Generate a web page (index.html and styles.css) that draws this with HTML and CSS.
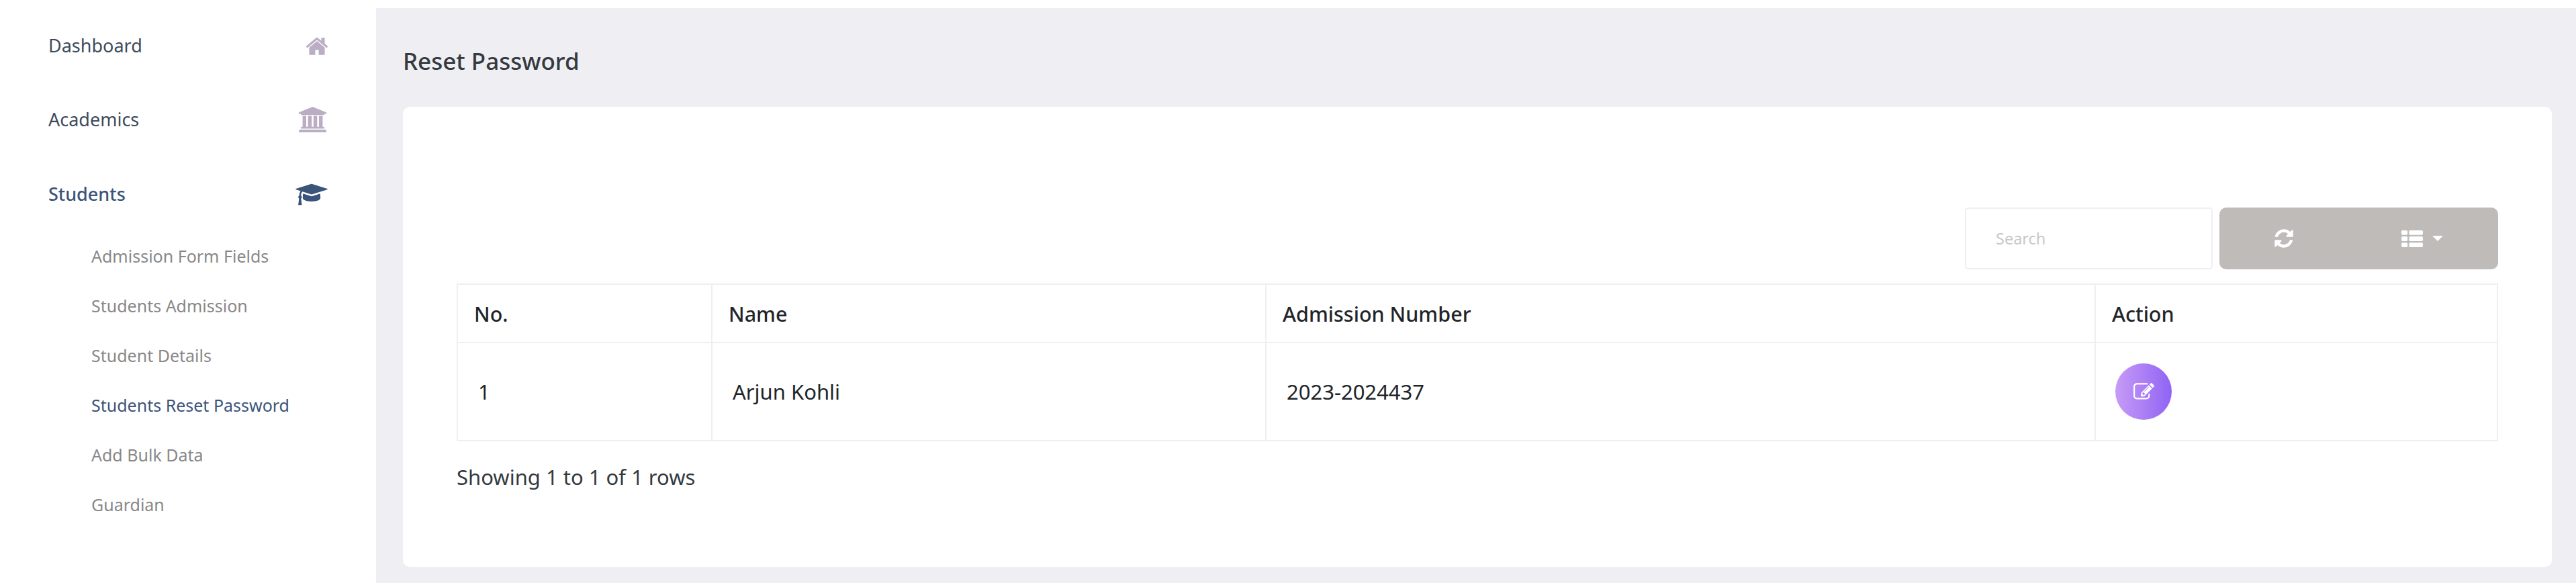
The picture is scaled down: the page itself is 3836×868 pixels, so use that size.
FILE: index.html
```html
<!DOCTYPE html>
<html lang="en">
  <head>
    <meta charset="utf-8" />
    <meta name="viewport" content="width=device-width, initial-scale=1" />
    <title>Reset Password</title>
    <link rel="stylesheet" href="styles.css">
  </head>
  <body>
    <nav class="sidebar">
      <a class="nav-item">
        <span>Dashboard</span>
        <svg class="nav-icon icon-home" viewBox="0 0 1792 1792"><path d="M1472 992v480q0 26-19 45t-45 19h-384v-384h-256v384h-384q-26 0-45-19t-19-45v-480q0-1 .5-3t.5-3l575-474 575 474q1 2 1 6zm223-69l-62 74q-8 9-21 11h-3q-13 0-21-7l-692-577-692 577q-12 8-24 7-13-2-21-11l-62-74q-8-10-7-23.5t11-21.5l719-599q32-26 76-26t76 26l244 204v-195q0-14 9-23t23-9h192q14 0 23 9t9 23v408l219 182q10 8 11 21.5t-7 23.5z"/></svg>
      </a>
      <a class="nav-item">
        <span>Academics</span>
        <svg class="nav-icon icon-bank" viewBox="0 0 1920 1792"><path d="M960 0l960 384v128h-128q0 26-20.5 45t-48.5 19h-1526q-28 0-48.5-19t-20.5-45h-128v-128zm-704 640h256v768h128v-768h256v768h128v-768h256v768h128v-768h256v768h59q28 0 48.5 19t20.5 45v64h-1664v-64q0-26 20.5-45t48.5-19h59v-768zm1595 960q28 0 48.5 19t20.5 45v128h-1920v-128q0-26 20.5-45t48.5-19h1782z"/></svg>
      </a>
      <a class="nav-item active">
        <span>Students</span>
        <svg class="nav-icon icon-cap" viewBox="0 0 2304 1792"><path d="M1774 836l18 316q4 69-82 128t-235 93.5-323 34.5-323-34.5-235-93.5-82-128l18-316 574 181q22 7 48 7t48-7zm530-324q0 23-22 31l-1120 352q-4 1-10 1t-10-1l-652-206q-43 34-71 111.5t-34 178.5q63 36 63 109 0 69-58 107l58 433q2 14-8 25-9 11-24 11h-192q-15 0-24-11-10-11-8-25l58-433q-58-38-58-107 0-73 65-111 11-207 98-330l-333-104q-22-8-22-31t22-31l1120-352q4-1 10-1t10 1l1120 352q22 8 22 31z"/></svg>
      </a>
      <ul class="sub-nav">
        <li>Admission Form Fields</li>
        <li>Students Admission</li>
        <li>Student Details</li>
        <li class="active">Students Reset Password</li>
        <li>Add Bulk Data</li>
        <li>Guardian</li>
      </ul>
    </nav>

    <main class="content">
      <h1 class="page-title">Reset Password</h1>
      <section class="card">
        <div class="toolbar">
          <input class="search" type="text" placeholder="Search" />
          <div class="btn-group">
            <button class="tool-btn" type="button">
              <svg class="icon-refresh" viewBox="0 0 1792 1792"><path d="M1639 1056q0 5-1 7-64 268-268 434.5t-478 166.5q-146 0-282.5-55t-243.5-157l-129 129q-19 19-45 19t-45-19-19-45v-448q0-26 19-45t45-19h448q26 0 45 19t19 45-19 45l-137 137q71 66 161 102t187 36q134 0 250-65t186-179q11-17 53-117 8-23 30-23h192q13 0 22.5 9.5t9.5 22.5zm25-800v448q0 26-19 45t-45 19h-448q-26 0-45-19t-19-45 19-45l138-138q-148-137-349-137-134 0-250 65t-186 179q-11 17-53 117-8 23-30 23h-199q-13 0-22.5-9.5t-9.5-22.5v-7q65-268 270-434.5t480-166.5q146 0 284 55.5t245 156.5l130-129q19-19 45-19t45 19 19 45z"/></svg>
            </button>
            <button class="tool-btn" type="button">
              <svg class="icon-list" viewBox="0 128 1792 1408"><path d="M512 1248v192q0 40-28 68t-68 28h-320q-40 0-68-28t-28-68v-192q0-40 28-68t68-28h320q40 0 68 28t28 68zm0-512v192q0 40-28 68t-68 28h-320q-40 0-68-28t-28-68v-192q0-40 28-68t68-28h320q40 0 68 28t28 68zm1280 512v192q0 40-28 68t-68 28h-960q-40 0-68-28t-28-68v-192q0-40 28-68t68-28h960q40 0 68 28t28 68zm-1280-1024v192q0 40-28 68t-68 28h-320q-40 0-68-28t-28-68v-192q0-40 28-68t68-28h320q40 0 68 28t28 68zm1280 512v192q0 40-28 68t-68 28h-960q-40 0-68-28t-28-68v-192q0-40 28-68t68-28h960q40 0 68 28t28 68zm0-512v192q0 40-28 68t-68 28h-960q-40 0-68-28t-28-68v-192q0-40 28-68t68-28h960q40 0 68 28t28 68z"/></svg>
              <span class="caret"></span>
            </button>
          </div>
        </div>

        <table class="data-table">
          <thead>
            <tr>
              <th class="col-no">No.</th>
              <th class="col-name">Name</th>
              <th class="col-adm">Admission Number</th>
              <th>Action</th>
            </tr>
          </thead>
          <tbody>
            <tr>
              <td>1</td>
              <td>Arjun Kohli</td>
              <td>2023-2024437</td>
              <td>
                <button class="edit-btn" type="button">
                  <svg class="icon-edit" viewBox="0 0 1792 1792"><path d="M888 1184l116-116-152-152-116 116v56h96v96h56zm440-720q-16-16-33 1l-350 350q-17 17-1 33t33-1l350-350q17-17 1-33zm80 594v190q0 119-84.5 203.5t-203.5 84.5h-832q-119 0-203.5-84.5t-84.5-203.5v-832q0-119 84.5-203.5t203.5-84.5h832q63 0 117 25 15 7 18 23 3 17-9 29l-49 49q-14 14-32 8-23-6-45-6h-832q-66 0-113 47t-47 113v832q0 66 47 113t113 47h832q66 0 113-47t47-113v-126q0-13 9-22l64-64q15-15 35-7t20 29zm-96-738l288 288-672 672h-288v-288zm444 132l-92 92-288-288 92-92q28-28 68-28t68 28l152 152q28 28 28 68t-28 68z"/></svg>
                </button>
              </td>
            </tr>
          </tbody>
        </table>
        <p class="table-info">Showing 1 to 1 of 1 rows</p>
      </section>
    </main>
  </body>
</html>
```

FILE: styles.css
```css
* {
  box-sizing: border-box;
}

html,
body {
  margin: 0;
  height: 868px;
  overflow: hidden;
}

body {
  display: flex;
  background-color: #fff;
  font-family: "Noto Sans", "Open Sans", sans-serif;
  color: #212529;
}

.sidebar {
  width: 560px;
  flex-shrink: 0;
  padding-top: 12px;
}

.nav-item {
  display: flex;
  align-items: center;
  justify-content: space-between;
  height: 110.5px;
  padding: 0 72px 0 72px;
  font-size: 27px;
  color: #3e4b5b;
}

.nav-icon {
  fill: #baadc4;
  display: block;
}

.icon-home {
  width: 36px;
  height: 36px;
  margin-top: 4px;
  margin-right: -2px;
}

.icon-bank {
  width: 41px;
  height: 38px;
  margin-top: 1px;
  margin-right: 2px;
}

.icon-cap {
  width: 48px;
  height: 37px;
  margin-top: 2px;
  margin-right: 0;
}

.nav-item.active {
  color: #3b5479;
  font-weight: 500;
}

.nav-item.active .nav-icon {
  fill: #3b5479;
}

.sub-nav {
  list-style: none;
  margin: 0;
  padding: 0 0 0 136px;
  font-size: 25px;
  color: #888;
}

.sub-nav li {
  height: 74px;
  line-height: 74px;
}

.sub-nav li.active {
  color: #3b5479;
}

.content {
  flex: 1;
  margin-top: 12px;
  padding: 0 36px 0 40px;
  background-color: #efeef3;
}

.page-title {
  margin: 0;
  height: 147px;
  padding-top: 54px;
  font-size: 35px;
  line-height: 50px;
  font-weight: 500;
  color: #343a40;
}

.card {
  height: 685px;
  padding: 150px 80px 0 80px;
  background-color: #fff;
  border-radius: 10px;
}

.toolbar {
  display: flex;
  justify-content: flex-end;
  gap: 10px;
  height: 92px;
  margin-bottom: 21px;
}

.search {
  width: 369px;
  height: 92px;
  padding: 0 44px;
  border: 2px solid #efeef3;
  border-radius: 5px;
  font-family: inherit;
  font-size: 23.5px;
  outline: none;
}

.search::placeholder {
  color: #c9c8c8;
}

.btn-group {
  display: flex;
  width: 415px;
  background-color: #bfbbb9;
  border-radius: 10px;
}

.tool-btn {
  display: flex;
  align-items: center;
  gap: 14px;
  height: 100%;
  border: 0;
  background: none;
  padding: 0;
}

.tool-btn:first-child {
  width: 271px;
  padding-left: 80px;
}

.tool-btn svg {
  fill: #fff;
  display: block;
}

.icon-refresh {
  width: 32px;
  height: 32px;
}

.icon-list {
  width: 32px;
  height: 25px;
}

.caret {
  width: 0;
  height: 0;
  border-left: 8px solid transparent;
  border-right: 8px solid transparent;
  border-top: 8px solid #fff;
}

.data-table {
  width: 3040px;
  border-collapse: collapse;
  table-layout: fixed;
  border: 2px solid #efeef3;
  font-size: 31px;
}

.data-table th,
.data-table td {
  border: 2px solid #efeef3;
  text-align: left;
  vertical-align: middle;
}

.data-table th {
  height: 87px;
  padding: 0 24px;
  font-size: 30.5px;
  font-weight: 500;
}

.data-table td {
  height: 146px;
  padding: 0 30px;
}

.col-no {
  width: 379px;
}

.col-name {
  width: 825px;
}

.col-adm {
  width: 1235px;
}

.edit-btn {
  display: flex;
  align-items: center;
  justify-content: center;
  width: 84px;
  height: 84px;
  margin-left: -1px;
  padding: 0;
  border: 0;
  border-radius: 50%;
  background: linear-gradient(to right, #c79bf6, #9063f5);
}

.icon-edit {
  width: 31px;
  height: 31px;
  fill: #fff;
}

.table-info {
  margin: 32px 0 0;
  font-size: 31px;
  line-height: 42px;
  color: #343a40;
}
```
